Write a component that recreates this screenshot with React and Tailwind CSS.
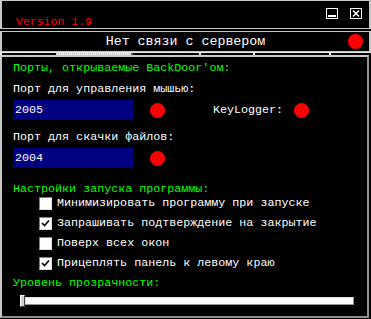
import React from 'react';

const Dot = () => <div className="w-[15px] h-[15px] rounded-full bg-[#ff0000] shrink-0" />;

const Check = ({ checked, children }) => (
  <div className="h-[20px] flex items-center pl-[26px]">
    <div className="w-[13px] h-[13px] bg-white border border-t-[#808080] border-l-[#808080] border-b-[#e0e0e0] border-r-[#e0e0e0] flex items-center justify-center shrink-0">
      {checked && (
        <svg width="9" height="9" viewBox="0 0 9 9">
          <path d="M1 4 L3.5 6.5 L8 1.5" stroke="#000" strokeWidth="1.6" fill="none" />
        </svg>
      )}
    </div>
    <span className="ml-[5px] text-white text-[11.7px] leading-[14px]">{children}</span>
  </div>
);

const PortInput = ({ value }) => (
  <div className="w-[120px] h-[20px] bg-[#000080] text-white text-[11.7px] leading-[20px] pl-[2px]">{value}</div>
);

export default function App() {
  return (
    <div className="w-[371px] h-[319px] bg-black flex flex-col font-['Liberation_Mono',monospace] overflow-hidden">
      {/* title bar */}
      <div className="h-[29px] border border-l-2 border-r-2 border-[#c8c8c8] flex items-start justify-between">
        <span className="mt-[14px] ml-[14px] text-[#ff0000] text-[11.5px] leading-[14px]">Version 1.9</span>
        <div className="flex gap-[12px] mt-[7px] mr-[7px]">
          <svg width="12" height="11" viewBox="0 0 12 11">
            <rect x="0.5" y="0.5" width="11" height="10" stroke="#fff" fill="none" />
            <rect x="2" y="7" width="8" height="2" fill="#fff" />
          </svg>
          <svg width="12" height="11" viewBox="0 0 12 11">
            <rect x="0.5" y="0.5" width="11" height="10" stroke="#fff" fill="none" />
            <path d="M3 2.5 L9 8.5 M9 2.5 L3 8.5" stroke="#fff" strokeWidth="1.5" />
          </svg>
        </div>
      </div>
      {/* status bar */}
      <div className="mt-[2px] h-[21px] border border-l-2 border-r-2 border-[#c8c8c8] flex items-center relative">
        <span className="flex-1 text-center text-white text-[13.3px] leading-[16px]">Нет связи с сервером</span>
        <div className="absolute right-[6px] top-[2px]"><Dot /></div>
      </div>
      {/* strip */}
      <div className="h-[3px] flex items-stretch border-t border-[#e8e8e8]">
        <div className="w-[2px] bg-[#e8e8e8]" />
        <div className="w-[54px]" />
        <div className="w-[77px] bg-[repeating-linear-gradient(90deg,#d0d0d0_0,#d0d0d0_1px,#f0f0f0_1px,#f0f0f0_2px)] border-r-2 border-[#606060]" />
        <div className="w-[66px]" />
        <div className="w-[2px] bg-[#e8e8e8]" />
        <div className="w-[52px]" />
        <div className="w-[2px] bg-[#e8e8e8]" />
        <div className="w-[74px]" />
        <div className="w-[2px] bg-[#e8e8e8]" />
      </div>
      {/* main panel */}
      <div className="flex-1 mr-[2px] mb-[1px] border-t-2 border-l-2 border-[#c8c8c8] border-r-2 border-r-[#909090] border-b-2 border-b-[#909090] pl-[11px]">
        <div className="mt-[4px] text-[#00ff00] text-[11.7px] leading-[14px]">Порты, открываемые BackDoor'ом:</div>
        <div className="mt-[7px] text-white text-[11.7px] leading-[14px]">Порт для управления мышью:</div>
        <div className="mt-[4px] flex items-center">
          <PortInput value="2005" />
          <div className="ml-[17px]"><Dot /></div>
          <span className="ml-[48px] text-white text-[11.7px] leading-[14px]">KeyLogger:</span>
          <div className="ml-[11px]"><Dot /></div>
        </div>
        <div className="mt-[10px] text-white text-[11.7px] leading-[14px]">Порт для скачки файлов:</div>
        <div className="mt-[4px] flex items-center">
          <PortInput value="2004" />
          <div className="ml-[17px]"><Dot /></div>
        </div>
        <div className="mt-[14px] text-[#00ff00] text-[11.7px] leading-[14px]">Настройки запуска программы:</div>
        <div className="-mt-[3px]">
          <Check>Минимизировать программу при запуске</Check>
          <Check checked>Запрашивать подтверждение на закрытие</Check>
          <Check>Поверх всех окон</Check>
          <Check checked>Прицеплять панель к левому краю</Check>
        </div>
        <div className="mt-[3px] text-[#00ff00] text-[11.7px] leading-[14px]">Уровень прозрачности:</div>
        <div className="mt-[5px] ml-[7px] w-[334px] h-[12px] flex items-center">
          <div className="w-[5px] h-[12px] bg-[#d0d0d0] border border-t-white border-l-white border-b-[#404040] border-r-[#404040] shrink-0" />
          <div className="flex-1 h-[8px] bg-white border border-t-[#e0e0e0] border-l-[#e0e0e0] border-b-[#909090] border-r-[#909090]" />
        </div>
      </div>
    </div>
  );
}
